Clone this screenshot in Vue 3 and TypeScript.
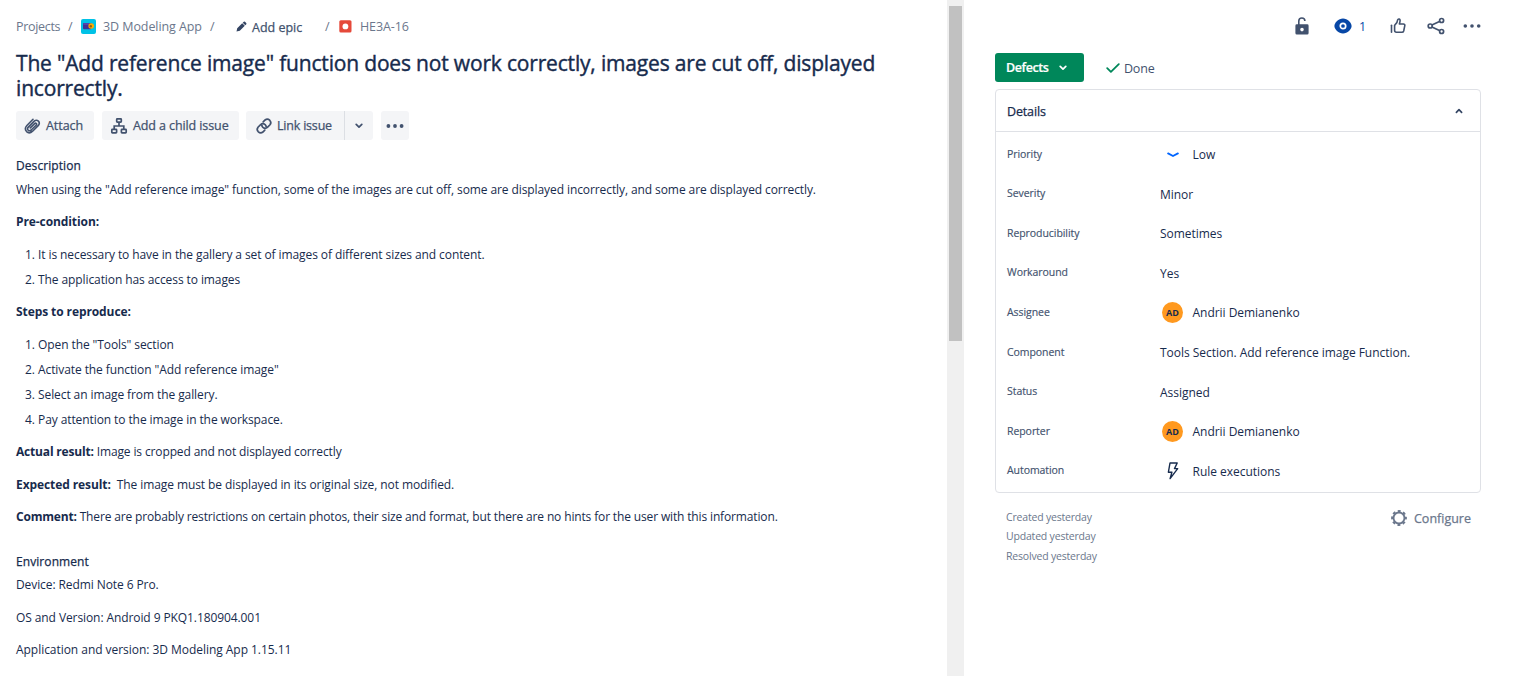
<script setup lang="ts">
interface Field {
  label: string
  value: string
  kind?: 'low' | 'person' | 'bolt'
}

const fields: Field[] = [
  { label: 'Priority', value: 'Low', kind: 'low' },
  { label: 'Severity', value: 'Minor' },
  { label: 'Reproducibility', value: 'Sometimes' },
  { label: 'Workaround', value: 'Yes' },
  { label: 'Assignee', value: 'Andrii Demianenko', kind: 'person' },
  { label: 'Component', value: 'Tools Section. Add reference image Function.' },
  { label: 'Status', value: 'Assigned' },
  { label: 'Reporter', value: 'Andrii Demianenko', kind: 'person' },
  { label: 'Automation', value: 'Rule executions', kind: 'bolt' },
]

const preconditions: string[] = [
  'It is necessary to have in the gallery a set of images of different sizes and content.',
  'The application has access to images',
]

const steps: string[] = [
  'Open the "Tools" section',
  'Activate the function "Add reference image"',
  'Select an image from the gallery.',
  'Pay attention to the image in the workspace.',
]
</script>

<template>
  <div class="page">
    <main class="issue">
      <nav class="crumbs">
        <span class="c-projects">Projects</span>
        <span class="c-slash s1">/</span>
        <svg class="c-app" width="15" height="15" viewBox="0 0 15 15">
          <rect width="15" height="15" rx="2" fill="#00c2e6" />
          <rect x="2" y="4" width="8.5" height="6.3" rx="1" fill="#403294" />
          <rect x="2" y="4" width="8.5" height="2" rx="1" fill="#5243aa" />
          <circle cx="10.2" cy="7" r="2.8" fill="#ffab00" />
          <circle cx="9.8" cy="7.2" r="1.2" fill="#8a6414" />
        </svg>
        <span class="c-name">3D Modeling App</span>
        <span class="c-slash s2">/</span>
        <svg class="c-pencil" width="11" height="11" viewBox="0 0 11 11">
          <path d="M0.5 10.5 L1.2 7.2 L6.2 2.2 L8.8 4.8 L3.8 9.8 Z M6.7 1.7 L7.8 0.7 Q8.4 0.2 9 0.7 L10.2 1.9 Q10.8 2.6 10.3 3.2 L9.3 4.3 Z" fill="#344563" />
        </svg>
        <span class="c-epic">Add epic</span>
        <span class="c-slash s3">/</span>
        <svg class="c-bug" width="13" height="13" viewBox="0 0 13 13">
          <rect x=".3" y=".3" width="12.2" height="12.2" rx="1.5" fill="#e5493a" />
          <circle cx="6.4" cy="6.4" r="2.9" fill="#fff" />
        </svg>
        <span class="c-key">HE3A-16</span>
      </nav>

      <h1 class="title">The "Add reference image" function does not work correctly, images are cut off, displayed<br />incorrectly.</h1>

      <div class="actions">
        <button class="btn attach">
          <svg width="18" height="18" viewBox="0 0 18 18" fill="none" stroke="#42526e" stroke-width="1.6" stroke-linecap="round">
            <path d="M6.3 10.9 L10.6 6.6 Q11.6 5.8 12.3 6.5 Q13 7.3 12.1 8.2 L7.2 13 Q5.4 14.4 4.1 13.1 Q2.9 11.7 4.3 10.1 L10.2 4.2 Q12.4 2.3 14.4 4.1 Q16.2 6.1 14.4 8.4 L8.6 14.2 Q5.3 17.2 2.6 14.6 Q0 11.6 2.9 8.5 L9 2.3" />
          </svg>
          <span>Attach</span>
        </button>
        <button class="btn child">
          <svg width="18" height="18" viewBox="0 0 18 18" fill="none" stroke="#42526e" stroke-width="1.7">
            <rect x="6.7" y="1.8" width="4.6" height="3.4" rx=".6" />
            <path d="M9 5.5 V9 M4.2 12 V9 H13.8 V12" />
            <rect x="1.8" y="12.4" width="4.8" height="3.4" rx=".6" />
            <rect x="11.4" y="12.4" width="4.8" height="3.4" rx=".6" />
          </svg>
          <span>Add a child issue</span>
        </button>
        <div class="split">
          <button class="btn link">
            <svg width="18" height="18" viewBox="0 0 18 18" fill="none" stroke="#42526e" stroke-width="1.7" stroke-linecap="round">
              <path d="M8.2 4.9 L10.1 3 Q12.4 1.2 14.7 3.2 Q16.8 5.5 15 7.8 L12.4 10.4 Q10.2 12.2 7.9 10.3 Q6.9 9.3 6.8 8.1" />
              <path d="M9.8 13.1 L7.9 15 Q5.6 16.8 3.3 14.8 Q1.2 12.5 3 10.2 L5.6 7.6 Q7.8 5.8 10.1 7.7 Q11.1 8.7 11.2 9.9" />
            </svg>
            <span>Link issue</span>
          </button>
          <button class="btn caret" aria-label="More link options">
            <svg width="8" height="6" viewBox="0 0 8 6" fill="none" stroke="#42526e" stroke-width="1.7" stroke-linecap="round" stroke-linejoin="round"><path d="M1.2 1.3 L4 4.1 L6.8 1.3" /></svg>
          </button>
        </div>
        <button class="btn more" aria-label="More actions">
          <svg width="18" height="4" viewBox="0 0 18 4" fill="#42526e"><circle cx="2.4" cy="2" r="1.9" /><circle cx="9" cy="2" r="1.9" /><circle cx="15.6" cy="2" r="1.9" /></svg>
        </button>
      </div>

      <section class="text">
        <h2>Description</h2>
        <p class="p-desc">When using the "Add reference image" function, some of the images are cut off, some are displayed incorrectly, and some are displayed correctly.</p>
        <p><strong>Pre-condition:</strong></p>
        <ol>
          <li v-for="(item, i) in preconditions" :key="item"><span class="num">{{ i + 1 }}.</span>{{ item }}</li>
        </ol>
        <p><strong>Steps to reproduce:</strong></p>
        <ol>
          <li v-for="(item, i) in steps" :key="item"><span class="num">{{ i + 1 }}.</span>{{ item }}</li>
        </ol>
        <p class="p-actual"><strong>Actual result:</strong> Image is cropped and not displayed correctly</p>
        <p><strong>Expected result:</strong>&nbsp; The image must be displayed in its original size, not modified.</p>
        <p class="p-comment"><strong>Comment:</strong> There are probably restrictions on certain photos, their size and format, but there are no hints for the user with this information.</p>
        <h2 class="env">Environment</h2>
        <p class="p-device">Device: Redmi Note 6 Pro.</p>
        <p>OS and Version: Android 9 PKQ1.180904.001</p>
        <p class="p-app">Application and version: 3D Modeling App 1.15.11</p>
      </section>
    </main>

    <div class="scrollbar"><div class="thumb"></div></div>

    <aside class="side">
      <div class="tools">
        <svg width="16" height="20" viewBox="0 0 16 20">
          <path d="M4.8 9 V5 Q4.8 2 7.9 2 Q10.8 2 10.9 5" fill="none" stroke="#42526e" stroke-width="1.6" />
          <path d="M2.8 8.3 H13.2 Q14.6 8.3 14.6 9.7 V17 Q14.6 18.6 13.2 18.6 H2.8 Q1.4 18.6 1.4 17 V9.7 Q1.4 8.3 2.8 8.3 Z M8 11.8 A1.8 1.8 0 1 0 8 15.4 A1.8 1.8 0 1 0 8 11.8 Z" fill="#42526e" fill-rule="evenodd" />
        </svg>
        <svg class="eye" width="18" height="16" viewBox="0 0 18 16">
          <path d="M9 .6 C13.5 .6 17.6 4.8 17.6 8 C17.6 11.2 13.5 15.4 9 15.4 C4.5 15.4 .4 11.2 .4 8 C.4 4.8 4.5 .6 9 .6 Z" fill="#0747a6" />
          <circle cx="9" cy="8" r="2.7" fill="none" stroke="#fff" stroke-width="1.7" />
        </svg>
        <span class="watchers">1</span>
        <svg class="thumb-up" width="16" height="16" viewBox="0 0 16 16" fill="none" stroke="#42526e" stroke-width="1.6" stroke-linejoin="round" stroke-linecap="round">
          <path d="M4.6 7.4 Q7.6 4.8 7.6 2 Q8 .8 9.2 1.1 Q10.4 1.6 10 3.4 L9.4 6 H13.4 Q15 6.2 14.8 7.6 L13.7 13 Q13.3 14.3 12 14.3 H6.5 Q4.6 14.2 4.6 12.6 Z" />
          <path d="M1.5 7.2 V14.3" />
        </svg>
        <svg class="share" width="18" height="18" viewBox="0 0 18 18" fill="none" stroke="#42526e" stroke-width="1.7">
          <path d="M4.9 8 L13 4.3 M4.9 10 L13 13.7" />
          <circle cx="3.2" cy="9" r="2" /><circle cx="14.6" cy="3.5" r="2" /><circle cx="14.6" cy="14.5" r="2" />
        </svg>
        <svg class="dots" width="18" height="4" viewBox="0 0 18 4" fill="#42526e"><circle cx="2.3" cy="2" r="1.8" /><circle cx="9" cy="2" r="1.8" /><circle cx="15.7" cy="2" r="1.8" /></svg>
      </div>

      <div class="state">
        <button class="status">
          <span>Defects</span>
          <svg width="8" height="6" viewBox="0 0 8 6" fill="none" stroke="#fff" stroke-width="1.7" stroke-linecap="round" stroke-linejoin="round"><path d="M1.2 1.3 L4 4.1 L6.8 1.3" /></svg>
        </button>
        <svg class="check" width="14" height="10" viewBox="0 0 14 10" fill="none" stroke="#00875a" stroke-width="1.8" stroke-linecap="round" stroke-linejoin="round"><path d="M1.2 5.2 L4.9 8.8 L12.8 1.1" /></svg>
        <span class="done">Done</span>
      </div>

      <section class="card">
        <header class="card-head">
          <span>Details</span>
          <svg width="8" height="6" viewBox="0 0 8 6" fill="none" stroke="#344563" stroke-width="1.7" stroke-linecap="round" stroke-linejoin="round"><path d="M1.4 4.3 L4 1.7 L6.6 4.3" /></svg>
        </header>
        <div class="fields">
          <div v-for="f in fields" :key="f.label" class="field">
            <span class="label">{{ f.label }}</span>
            <span v-if="f.kind" class="mark">
              <svg v-if="f.kind === 'low'" width="12" height="6" viewBox="0 0 12 6" fill="none" stroke="#0065ff" stroke-width="1.8" stroke-linecap="round" stroke-linejoin="round"><path d="M1.1 1.4 L6 4 L10.9 1.4" /></svg>
              <span v-else-if="f.kind === 'person'" class="avatar">AD</span>
              <svg v-else width="12" height="18" viewBox="0 0 12 18" fill="none" stroke="#172b4d" stroke-width="1.4" stroke-linejoin="round"><path d="M3 1 H10.2 L7.5 6.6 H10.7 L3.1 16.6 L4.9 10.2 H1.4 Z" /></svg>
            </span>
            <span class="value">{{ f.value }}</span>
          </div>
        </div>
      </section>

      <footer class="foot">
        <div class="dates">
          <span>Created yesterday</span>
          <span>Updated yesterday</span>
          <span>Resolved yesterday</span>
        </div>
        <div class="configure">
          <svg width="16" height="16" viewBox="0 0 16 16" fill="none" stroke="#6b778c">
            <circle cx="8" cy="8" r="5.5" stroke-width="1.9" />
            <circle cx="8" cy="8" r="6.9" stroke-width="2" stroke-dasharray="2.9 2.52" stroke-dashoffset="1.45" />
          </svg>
          <span>Configure</span>
        </div>
      </footer>
    </aside>
  </div>
</template>

<style>
body {
  background: #fff;
  overflow: hidden;
}
</style>

<style scoped>
.page {
  display: flex;
  width: 1528px;
  height: 676px;
  overflow: hidden;
  background: #fff;
  color: #172b4d;
  font-family: 'Open Sans', 'Noto Sans', sans-serif;
  font-size: 12px;
}
.page svg {
  display: block;
  flex: none;
}
.issue {
  width: 931px;
  padding-left: 16px;
  white-space: nowrap;
}
.crumbs {
  display: flex;
  align-items: center;
  height: 20px;
  margin-top: 16px;
  color: #6b778c;
  font-size: 12.5px;
}
.c-projects { width: 52px; letter-spacing: -0.32px; }
.c-slash { width: 13px; }
.c-name { width: 107px; margin-left: 7px; letter-spacing: -0.08px; }
.s2 { width: 26px; }
.c-epic {
  width: 73px;
  margin-left: 5px;
  padding-top: 2px;
  color: #42526e;
  -webkit-text-stroke: 0.25px;
}
.s3 { width: 14px; }
.c-key { margin-left: 8px; letter-spacing: -0.1px; }
.title {
  margin: 15px 0 0;
  font-size: 21px;
  line-height: 25.2px;
  font-weight: 500;
  letter-spacing: -0.175px;
  -webkit-text-stroke: 0.4px;
}
.actions {
  display: flex;
  margin-top: 10px;
  height: 29px;
}
.btn {
  display: flex;
  align-items: center;
  box-sizing: border-box;
  height: 29px;
  padding: 0 0 0 8px;
  border: 0;
  border-radius: 3px;
  background: #f4f5f7;
  color: #42526e;
  font: 500 12.5px 'Open Sans', 'Noto Sans', sans-serif;
  letter-spacing: -0.1px;
  white-space: nowrap;
  -webkit-text-stroke: 0.25px;
}
.btn span { margin-left: 4px; }
.attach { width: 78px; margin-right: 8px; }
.attach span { letter-spacing: -0.05px; }
.child { width: 137px; margin-right: 7px; }
.child span { margin-left: 5px; }
.split { display: flex; width: 127px; margin-right: 8px; }
.link { width: 99px; padding-left: 9px; border-radius: 3px 0 0 3px; border-right: 1px solid #dcdfe4; }
.link span { letter-spacing: -0.2px; }
.caret { width: 28px; padding: 0 0 0 10px; border-radius: 0 3px 3px 0; }
.more { width: 28px; padding: 0 0 0 5px; }
.text {
  line-height: 20px;
  padding-top: 16px;
  letter-spacing: -0.09px;
}
.text h2 {
  margin: 0;
  font-size: 12px;
  font-weight: 500;
  letter-spacing: 0.08px;
  -webkit-text-stroke: 0.25px;
}
.text p { margin: 12.4px 0 0; }
.text .p-desc { margin-top: 3.7px; }
.text ol {
  margin: 12.4px 0 0;
  padding: 0;
  list-style: none;
}
.text li { display: flex; height: 25.2px; }
.text ol + p { margin-top: 7px; }
.num { width: 22px; box-sizing: border-box; padding-left: 9px; }
.text .p-actual { letter-spacing: -0.13px; }
.text .p-comment { letter-spacing: -0.145px; }
.text .p-app { letter-spacing: -0.04px; }
.text .env { margin-top: 25px; }
.text .p-device { margin-top: 3px; }
strong { font-weight: 700; }
.p-actual strong { letter-spacing: -0.18px; }
.p-comment strong { letter-spacing: -0.2px; }
.scrollbar {
  width: 17px;
  box-sizing: border-box;
  padding: 6px 2px 0;
  background: #f0f0f0;
}
.thumb { height: 335px; background: #c1c1c1; }
.side {
  width: 486px;
  margin-left: 31px;
}
.tools {
  display: flex;
  align-items: center;
  height: 20px;
  margin-top: 16px;
  padding-left: 299px;
}
.eye { margin-left: 24px; }
.watchers { width: 8px; margin-left: 7px; color: #0747a6; font-size: 12.5px; }
.thumb-up { margin-left: 23px; }
.share { margin-left: 21px; }
.dots { margin-left: 18px; }
.state {
  display: flex;
  align-items: center;
  margin-top: 17px;
  height: 29px;
}
.status {
  display: flex;
  align-items: center;
  justify-content: flex-start;
  box-sizing: border-box;
  width: 89px;
  height: 29px;
  padding: 0 0 0 11px;
  border: 0;
  border-radius: 3px;
  background: #00875a;
  color: #fff;
  font: 600 12.5px 'Open Sans', 'Noto Sans', sans-serif;
}
.status span { width: 53px; text-align: left; letter-spacing: -0.4px; -webkit-text-stroke: 0.2px; }
.check { margin-left: 22px; }
.done { margin-left: 4px; padding-top: 2px; color: #42526e; font-size: 12.5px; letter-spacing: -0.2px; }
.card {
  box-sizing: border-box;
  height: 404px;
  margin-top: 7px;
  border: 1px solid #dfe1e6;
  border-radius: 4px;
}
.card-head {
  display: flex;
  align-items: center;
  justify-content: space-between;
  height: 41px;
  padding: 0 17px 0 11px;
  border-bottom: 1px solid #dfe1e6;
  font-size: 12.5px;
}
.card-head span {
  padding-top: 2px;
  letter-spacing: -0.15px;
  -webkit-text-stroke: 0.25px;
}
.fields { padding: 2.8px 0 0 11px; }
.field {
  display: flex;
  align-items: center;
  height: 39.6px;
}
.label {
  width: 153px;
  padding-bottom: 2px;
  color: #42526e;
  font-size: 10.5px;
  letter-spacing: -0.06px;
  -webkit-text-stroke: 0.15px;
}
.mark {
  display: flex;
  justify-content: center;
  width: 25px;
  margin-right: 7.5px;
}
.value { letter-spacing: -0.03px; }
.avatar {
  width: 21px;
  height: 21px;
  border-radius: 50%;
  background: #ff991f;
  color: #172b4d;
  font-size: 9px;
  font-weight: 700;
  line-height: 21px;
  text-align: center;
}
.foot {
  display: flex;
  justify-content: space-between;
  padding: 15px 10px 0 11px;
}
.dates {
  display: flex;
  flex-direction: column;
  color: #6b778c;
  font-size: 10.5px;
  line-height: 19.4px;
  letter-spacing: -0.19px;
}
.configure {
  display: flex;
  align-items: center;
  height: 20px;
  gap: 7px;
  color: #6b778c;
  font-size: 12.5px;
  -webkit-text-stroke: 0.25px;
}
</style>
